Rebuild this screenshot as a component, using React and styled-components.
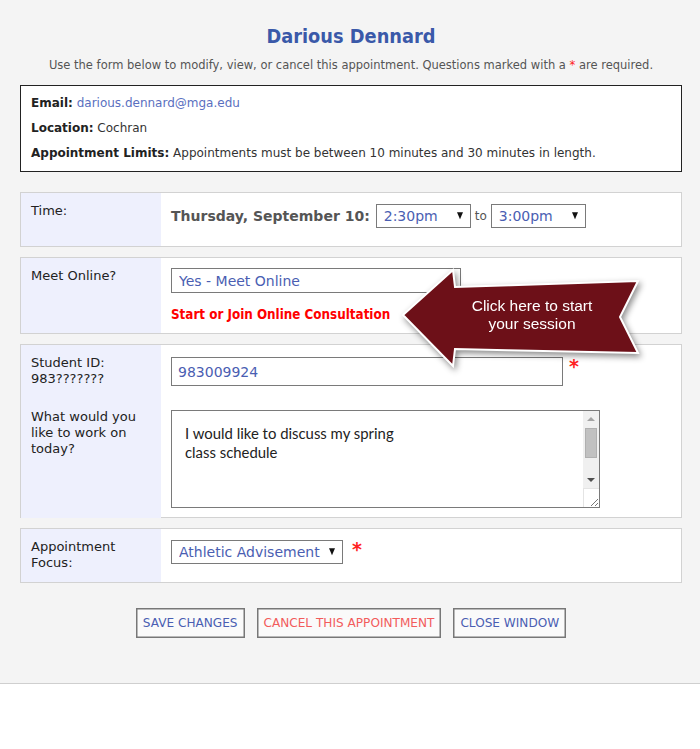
import styled, { createGlobalStyle } from "styled-components";

const GlobalStyle = createGlobalStyle`
  html, body {
    margin: 0;
    padding: 0;
    background: #fff;
  }
  body {
    font-family: "DejaVu Sans", sans-serif;
    color: #333;
  }
`;

const Page = styled.div`
  background: #f4f4f4;
  border-bottom: 1px solid #cfcfcf;
  padding: 24px 18px 45px 20px;
  height: 614px;
`;

const Title = styled.h1`
  margin: 0;
  text-align: center;
  font-family: "DejaVu Sans Condensed", "DejaVu Sans", sans-serif;
  font-size: 19.8px;
  font-weight: bold;
  color: #3a59a9;
  line-height: 26px;
`;

const Subtitle = styled.p`
  margin: 8px 0 0;
  text-align: center;
  font-size: 11.5px;
  color: #555;
  line-height: 14px;
`;

const Req = styled.span`
  color: #f22;
  font-size: ${(p) => (p.big ? "19px" : "inherit")};
  font-weight: ${(p) => (p.big ? "bold" : "normal")};
  line-height: 1;
  margin-left: ${(p) => p.ml || 0}px;
  align-self: flex-start;
`;

const InfoBox = styled.div`
  margin-top: 13px;
  background: #fff;
  border: 1px solid #222;
  padding: 9px 10px 10px;
  display: flex;
  flex-direction: column;
  gap: 9px;
  font-size: 12px;
  line-height: 16px;
  color: #333;

  b {
    color: #222;
  }
  a {
    color: #5a6fc0;
    text-decoration: none;
  }
`;

const Panel = styled.div`
  position: relative;
  margin-top: ${(p) => p.gap || 10}px;
  display: grid;
  grid-template-columns: 140px 1fr;
  background: #fff;
  border: 1px solid #d2d2d2;
  height: ${(p) => p.h}px;
  box-sizing: border-box;
`;

const LabelCell = styled.div`
  background: #eef0fd;
  padding: ${(p) => p.pt || 10}px 10px 10px 10px;
  font-size: 13px;
  line-height: 16px;
  color: #222;
  display: flex;
  flex-direction: column;
  gap: ${(p) => p.gap || 0}px;
`;

const ValueCell = styled.div`
  padding: ${(p) => p.pt || 11}px 10px 10px 10px;
  display: flex;
  flex-direction: column;
  align-items: flex-start;
  gap: ${(p) => p.gap || 0}px;
`;

const Row = styled.div`
  display: flex;
  align-items: center;
  gap: ${(p) => p.gap || 4}px;
`;

const DateText = styled.span`
  font-weight: bold;
  font-size: 14px;
  color: #555;
  margin-right: 2px;
`;

const SmallText = styled.span`
  font-size: 12px;
  color: #555;
`;

const SelectWrap = styled.div`
  position: relative;
  width: ${(p) => p.w}px;
  height: ${(p) => p.h || 24}px;
`;

const Select = styled.select`
  appearance: none;
  -webkit-appearance: none;
  width: 100%;
  height: 100%;
  box-sizing: border-box;
  border: 1px solid #7a7a7a;
  border-radius: 0;
  background: #fff;
  padding: 0 18px 0 7px;
  font-family: "DejaVu Sans", sans-serif;
  font-size: 14px;
  color: #4a5eb2;
  outline: none;
`;

const Caret = styled.span`
  position: absolute;
  right: 8px;
  top: 50%;
  transform: translateY(-55%);
  width: 0;
  height: 0;
  border-left: 3.5px solid transparent;
  border-right: 3.5px solid transparent;
  border-top: 7px solid #111;
  pointer-events: none;
`;

const ConsultLink = styled.a`
  margin-top: 14px;
  font-family: "DejaVu Sans Condensed", "DejaVu Sans", sans-serif;
  font-size: 13.3px;
  font-weight: bold;
  color: #f00;
  text-decoration: none;
`;

const TextInput = styled.input`
  width: 392px;
  height: 29px;
  box-sizing: border-box;
  border: 1px solid #7a7a7a;
  padding: 0 6px;
  font-family: "DejaVu Sans", sans-serif;
  font-size: 14px;
  color: #4a5eb2;
  outline: none;
`;

const TextAreaBox = styled.div`
  display: flex;
  width: 429px;
  height: 98px;
  box-sizing: border-box;
  border: 1px solid #7a7a7a;
  background: #fff;
`;

const TextArea = styled.textarea`
  flex: 1;
  border: none;
  padding: 13px 10px 0 13px;
  font-family: Lato, "Open Sans", sans-serif;
  font-size: 14.9px;
  line-height: 19px;
  color: #222;
  resize: none;
  overflow: hidden;
  outline: none;
`;

const ScrollTrack = styled.div`
  width: 16px;
  display: flex;
  flex-direction: column;
  background: #f0f0f0;
`;

const ScrollButton = styled.div`
  height: 16px;
  display: flex;
  align-items: center;
  justify-content: center;

  &::before {
    content: "";
    width: 0;
    height: 0;
    border-left: 4px solid transparent;
    border-right: 4px solid transparent;
    ${(p) =>
      p.down
        ? "border-top: 4px solid #505050;"
        : "border-bottom: 4px solid #a3a3a3;"}
  }
`;

const ScrollThumb = styled.div`
  height: 30px;
  margin: 1px 2px 0;
  background: #c1c1c1;
  border: 1px solid #b0b0b0;
  box-sizing: border-box;
`;

const ScrollSpacer = styled.div`
  flex: 1;
`;

const ResizeCorner = styled.div`
  height: 18px;
  background: #fff;
  border-top: 1px solid #e4e4e4;
  border-left: 1px solid #e4e4e4;
  display: flex;
  align-items: flex-end;
  justify-content: flex-end;
`;

const Buttons = styled.div`
  margin-top: 25px;
  display: flex;
  justify-content: center;
  gap: 12px;
`;

const Button = styled.button`
  height: 30px;
  padding: 0 6px;
  background: #fafafa;
  border: 1px solid #777;
  box-shadow: inset 0 0 0 0.5px #777;
  border-radius: 0;
  font-family: "DejaVu Sans", sans-serif;
  font-size: 12.1px;
  color: ${(p) => (p.danger ? "#f25c5c" : "#4a5eb2")};
  cursor: pointer;
`;

const Callout = styled.div`
  position: absolute;
  left: 378px;
  top: 5px;
  width: 248px;
  height: 110px;
  z-index: 2;
  filter: drop-shadow(2px 3px 3px rgba(0, 0, 0, 0.45));

  svg {
    position: absolute;
    inset: 0;
  }
`;

const CalloutText = styled.div`
  position: absolute;
  left: 43px;
  top: 34px;
  width: 180px;
  text-align: center;
  font-family: "Liberation Sans", Arial, sans-serif;
  font-size: 15.5px;
  line-height: 18px;
  color: #fff;
`;

const ArrowCallout = () => (
  <Callout>
    <svg width="248" height="110" viewBox="0 0 248 110">
      <path
        d="M4 52 L54 7 L56 24 L239 18 L221 54 L239 90 L56 86 L54 103 Z"
        fill="#6d1018"
        stroke="#fff"
        strokeWidth="2"
      />
    </svg>
    <CalloutText>
      Click here to start
      <br />
      your session
    </CalloutText>
  </Callout>
);

const Dropdown = ({ w, h, value }) => (
  <SelectWrap w={w} h={h}>
    <Select defaultValue={value}>
      <option>{value}</option>
    </Select>
    <Caret />
  </SelectWrap>
);

const NotesBox = ({ value }) => (
  <TextAreaBox>
    <TextArea defaultValue={value} />
    <ScrollTrack>
      <ScrollButton />
      <ScrollThumb />
      <ScrollSpacer />
      <ScrollButton down />
      <ResizeCorner>
        <svg width="10" height="10" viewBox="0 0 10 10">
          <path d="M9 2 L2 9 M9 6 L6 9" stroke="#777" strokeWidth="1" />
        </svg>
      </ResizeCorner>
    </ScrollTrack>
  </TextAreaBox>
);

const App = () => {
  return (
    <>
      <GlobalStyle />
      <Page>
        <Title>Darious Dennard</Title>
        <Subtitle>
          Use the form below to modify, view, or cancel this appointment.
          Questions marked with a <Req>*</Req> are required.
        </Subtitle>

        <InfoBox>
          <div>
            <b>Email:</b> <a href="#">darious.dennard@mga.edu</a>
          </div>
          <div>
            <b>Location:</b> Cochran
          </div>
          <div>
            <b>Appointment Limits:</b> Appointments must be between 10 minutes
            and 30 minutes in length.
          </div>
        </InfoBox>

        <Panel gap={20} h={55}>
          <LabelCell>Time:</LabelCell>
          <ValueCell>
            <Row gap={4}>
              <DateText>Thursday, September 10:</DateText>
              <Dropdown w={95} value="2:30pm" />
              <SmallText>to</SmallText>
              <Dropdown w={95} value="3:00pm" />
            </Row>
          </ValueCell>
        </Panel>

        <Panel h={77}>
          <LabelCell>Meet Online?</LabelCell>
          <ValueCell pt={10}>
            <Dropdown w={290} h={25} value="Yes - Meet Online" />
            <ConsultLink href="#">Start or Join Online Consultation</ConsultLink>
          </ValueCell>
          <ArrowCallout />
        </Panel>

        <Panel h={174}>
          <LabelCell gap={22}>
            <div>
              Student ID:
              <br />
              983???????
            </div>
            <div>
              What would you
              <br />
              like to work on
              <br />
              today?
            </div>
          </LabelCell>
          <ValueCell pt={12} gap={24}>
            <Row gap={0}>
              <TextInput defaultValue="983009924" />
              <Req big ml={2}>
                *
              </Req>
            </Row>
            <NotesBox value={"I would like to discuss my spring\nclass schedule"} />
          </ValueCell>
        </Panel>

        <Panel h={55}>
          <LabelCell>
            Appointment
            <br />
            Focus:
          </LabelCell>
          <ValueCell>
            <Row gap={0}>
              <Dropdown w={172} h={24} value="Athletic Advisement" />
              <Req big ml={5}>
                *
              </Req>
            </Row>
          </ValueCell>
        </Panel>

        <Buttons>
          <Button>SAVE CHANGES</Button>
          <Button danger>CANCEL THIS APPOINTMENT</Button>
          <Button>CLOSE WINDOW</Button>
        </Buttons>
      </Page>
    </>
  );
};

export default App;
